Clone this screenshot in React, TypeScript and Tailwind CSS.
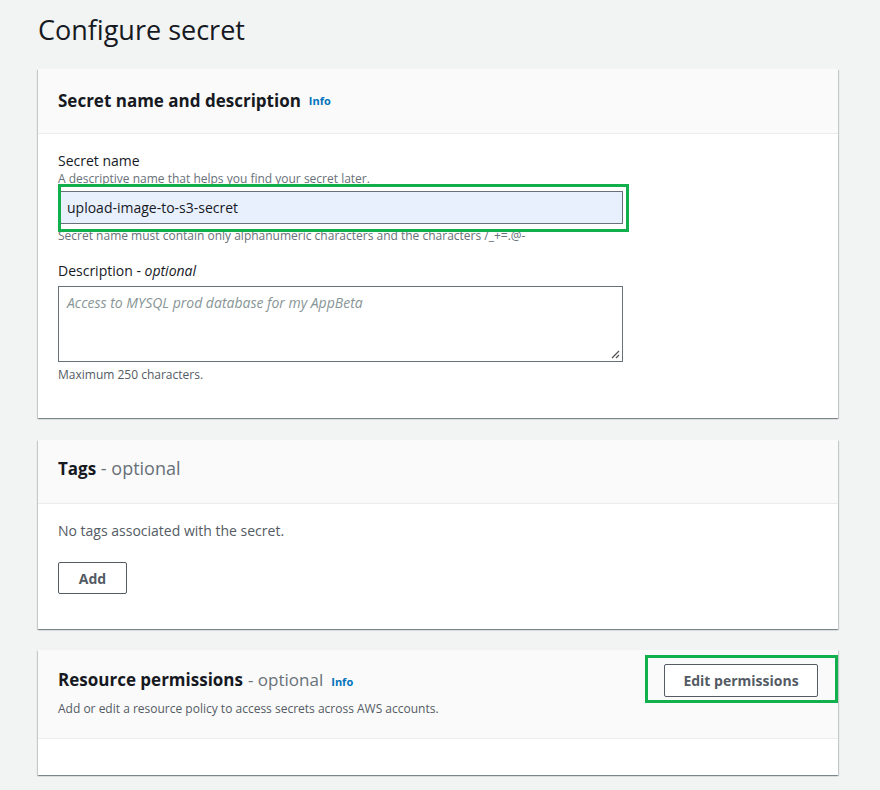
import React from "react";

const font = { fontFamily: '"Open Sans", "Noto Sans", Arial, sans-serif' };

const cardShadow =
  "bg-white shadow-[0_1px_1px_0_rgba(0,28,36,0.3),1px_1px_1px_0_rgba(0,28,36,0.15),-1px_1px_1px_0_rgba(0,28,36,0.15)]";

function Info() {
  return <span className="ml-2 text-[11px] font-bold text-[#0073bb]">Info</span>;
}

export default function App() {
  return (
    <div className="min-h-[790px] w-[880px] bg-[#f2f3f3] pl-[38px] pr-[42px] text-[#16191f]" style={font}>
      <h1 className="pt-[12px] text-[27px] leading-[36px] font-normal text-[#16191f]">Configure secret</h1>

      {/* Card 1 */}
      <div className={`mt-[21px] ${cardShadow}`}>
        <div className="flex h-[65px] items-center border-b border-[#eaeded] bg-[#fafafa] px-[20px]">
          <h2 className="text-[17px] font-bold">Secret name and description</h2>
          <Info />
        </div>
        <div className="px-[20px] pt-[17px] pb-[35px]">
          <div className="text-[14px] leading-[20px]">Secret name</div>
          <div className="text-[12px] leading-[16px] text-[#687078]">A descriptive name that helps you find your secret later.</div>
          <div className="relative mt-[-3px] h-[48px] pt-[7px]">
            <div className="flex h-[33px] w-[565px] items-center border border-[#687078] bg-[#e8f0fe] px-[8px] text-[14px]">upload-image-to-s3-secret</div>
            <div className="pointer-events-none absolute left-0 top-0 z-10 h-[48px] w-[571px] border-[3px] border-[#12b04d]" />
          </div>
          <div className="mt-[-4px] text-[12px] leading-[16px] text-[#687078]">Secret name must contain only alphanumeric characters and the characters /_+=.@-</div>
          <div className="mt-[17px] text-[14px] leading-[20px]">
            Description - <span className="italic">optional</span>
          </div>
          <div className="relative mt-[5px] h-[76px] w-[565px] border border-[#687078] bg-white px-[8px] py-[5px] text-[14px] italic text-[#879596]">
            Access to MYSQL prod database for my AppBeta
            <svg className="absolute bottom-[2px] right-[2px]" width="9" height="9" viewBox="0 0 9 9">
              <line x1="1" y1="8" x2="8" y2="1" stroke="#555" strokeWidth="1.2" />
              <line x1="5" y1="8" x2="8" y2="5" stroke="#555" strokeWidth="1.2" />
            </svg>
          </div>
          <div className="mt-[5px] text-[12px] leading-[16px] text-[#545b64]">Maximum 250 characters.</div>
        </div>
      </div>

      {/* Card 2 */}
      <div className={`mt-[22px] ${cardShadow}`}>
        <div className="flex h-[64px] items-center border-b border-[#eaeded] bg-[#fafafa] px-[20px] pb-[6px]">
          <h2 className="text-[17px]">
            <span className="font-bold">Tags</span>
            <span className="text-[18px] text-[#687078]"> - optional</span>
          </h2>
        </div>
        <div className="px-[20px] pt-[17px] pb-[35px]">
          <div className="text-[14px] leading-[20px] text-[#545b64]">No tags associated with the secret.</div>
          <button className="mt-[21px] flex h-[32px] w-[69px] items-center justify-center rounded-[2px] border border-[#545b64] bg-white text-[14px] font-bold text-[#545b64]">Add</button>
        </div>
      </div>

      {/* Card 3 */}
      <div className={`mt-[21px] ${cardShadow}`}>
        <div className="flex h-[89px] items-start justify-between border-b border-[#eaeded] bg-[#fafafa] pl-[20px] pr-[20px]">
          <div className="pt-[18px]">
            <h2 className="flex items-baseline text-[17px] leading-[24px]">
              <span className="font-bold">Resource permissions</span>
              <span className="ml-[5px] text-[#687078]">- optional</span>
              <Info />
            </h2>
            <div className="mt-[7px] text-[12px] leading-[16px] text-[#545b64]">Add or edit a resource policy to access secrets across AWS accounts.</div>
          </div>
          <div className="relative mt-[5px] mr-[-20px] h-[48px] w-[193px] border-[3px] border-[#12b04d]">
            <button className="absolute left-[16px] top-[6px] flex h-[33px] w-[154px] items-center justify-center rounded-[2px] border border-[#545b64] bg-white text-[14px] font-bold text-[#545b64]">Edit permissions</button>
          </div>
        </div>
        <div className="h-[36px]" />
      </div>
    </div>
  );
}
